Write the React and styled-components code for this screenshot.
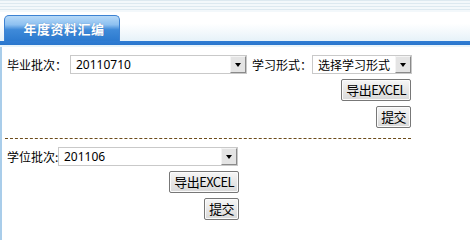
import React from "react";
import styled, { createGlobalStyle } from "styled-components";

const GlobalStyle = createGlobalStyle`
  html, body {
    margin: 0;
    padding: 0;
    background: #fff;
    font-family: "Noto Sans", "Noto Sans CJK SC", sans-serif;
    font-size: 12px;
    color: #000;
  }
`;

const Header = styled.div`
  height: 47px;
  background:
    linear-gradient(#e8f4fa, #e8f4fa) 0 45px / 100% 2px no-repeat,
    linear-gradient(#2f7dd4, #2a76cc) 0 41px / 100% 4px no-repeat,
    linear-gradient(#ffffff 0%, #ffffff 40%, #e6f2f9 100%) 0 12px / 100% 29px no-repeat,
    repeating-linear-gradient(#dde9f0 0px, #dde9f0 1px, #f3f8fb 1px, #f3f8fb 3px) 0 0 / 100% 12px no-repeat;
  display: flex;
  align-items: flex-end;
  padding-left: 4px;
`;

const Tab = styled.div`
  width: 116px;
  height: 26px;
  margin-bottom: 6px;
  border: 1px solid #3d82d2;
  border-bottom: none;
  border-radius: 5px 5px 0 0;
  background: linear-gradient(#b6d9f8 0%, #8dc0f0 35%, #3f8ad9 55%, #2c7acf 100%);
  color: #fff;
  font-family: "Noto Sans CJK SC", sans-serif;
  font-weight: bold;
  font-size: 13px;
  display: flex;
  align-items: center;
  justify-content: center;
  padding-left: 4px;
  box-sizing: border-box;
  letter-spacing: 0.5px;
  text-shadow: 0 0 1px rgba(30, 80, 150, 0.6);
`;

const Main = styled.div`
  border-left: 2px solid #a9cdea;
  padding: 8px 0 30px 3px;
  min-height: 186px;
  box-sizing: border-box;
`;

const Section = styled.div`
  width: ${(p) => p.$w}px;
  display: flex;
  flex-direction: column;
  align-items: flex-end;
`;

const Row = styled.div`
  align-self: stretch;
  display: flex;
  align-items: center;
  height: 19px;
`;

const Label = styled.span`
  width: ${(p) => p.$w}px;
  padding-left: ${(p) => p.$pl || 0}px;
  font-family: "Noto Sans CJK SC", sans-serif;
  font-size: 12px;
  white-space: nowrap;
  flex-shrink: 0;
`;

const Select = styled.div`
  width: ${(p) => p.$w}px;
  height: 19px;
  box-sizing: border-box;
  border: 1px solid #c9c9c9;
  background: #fff;
  display: flex;
  align-items: center;
  flex-shrink: 0;
`;

const SelectText = styled.span`
  flex: 1;
  padding-left: 5px;
  font-family: "Noto Sans", "Noto Sans CJK SC", sans-serif;
  font-size: 12px;
  white-space: nowrap;
  overflow: hidden;
`;

const Arrow = styled.span`
  width: 16px;
  height: 17px;
  box-sizing: border-box;
  border-top: 1px solid #f4f4f4;
  border-left: 1px solid #f4f4f4;
  border-right: 1px solid #8a8a8a;
  border-bottom: 1px solid #8a8a8a;
  background: #e4e4e4;
  display: flex;
  align-items: center;
  justify-content: center;

  &::after {
    content: "";
    border-left: 3px solid transparent;
    border-right: 3px solid transparent;
    border-top: 4px solid #000;
  }
`;

const Button = styled.button`
  margin-top: ${(p) => p.$mt}px;
  height: 22px;
  padding: 0 4px;
  border: 1px solid #777;
  border-radius: 2px;
  background: linear-gradient(#f6f6f6, #d9d9d9);
  font-family: "Noto Sans CJK SC", sans-serif;
  font-size: 13px;
  letter-spacing: -0.6px;
  color: #000;
  line-height: 20px;
  box-shadow: inset 0 0 0 1px #fbfbfb;
`;

const Divider = styled.div`
  width: 406px;
  margin: 10px 0 8px;
  border-top: 1px dashed #6b4a1a;
`;

export default function App() {
  return (
    <>
      <GlobalStyle />
      <Header>
        <Tab>年度资料汇编</Tab>
      </Header>
      <Main>
        <Section $w={406}>
          <Row>
            <Label $w={63} $pl={2}>毕业批次：</Label>
            <Select $w={177}>
              <SelectText>20110710</SelectText>
              <Arrow />
            </Select>
            <Label $w={60} $pl={5}>学习形式：</Label>
            <Select $w={100}>
              <SelectText>选择学习形式</SelectText>
              <Arrow />
            </Select>
          </Row>
          <Button $mt={5}>导出EXCEL</Button>
          <Button $mt={5}>提交</Button>
        </Section>
        <Divider />
        <Section $w={234}>
          <Row>
            <Label $w={51} $pl={2}>学位批次:</Label>
            <Select $w={180}>
              <SelectText>201106</SelectText>
              <Arrow />
            </Select>
          </Row>
          <Button $mt={5}>导出EXCEL</Button>
          <Button $mt={5}>提交</Button>
        </Section>
      </Main>
    </>
  );
}
